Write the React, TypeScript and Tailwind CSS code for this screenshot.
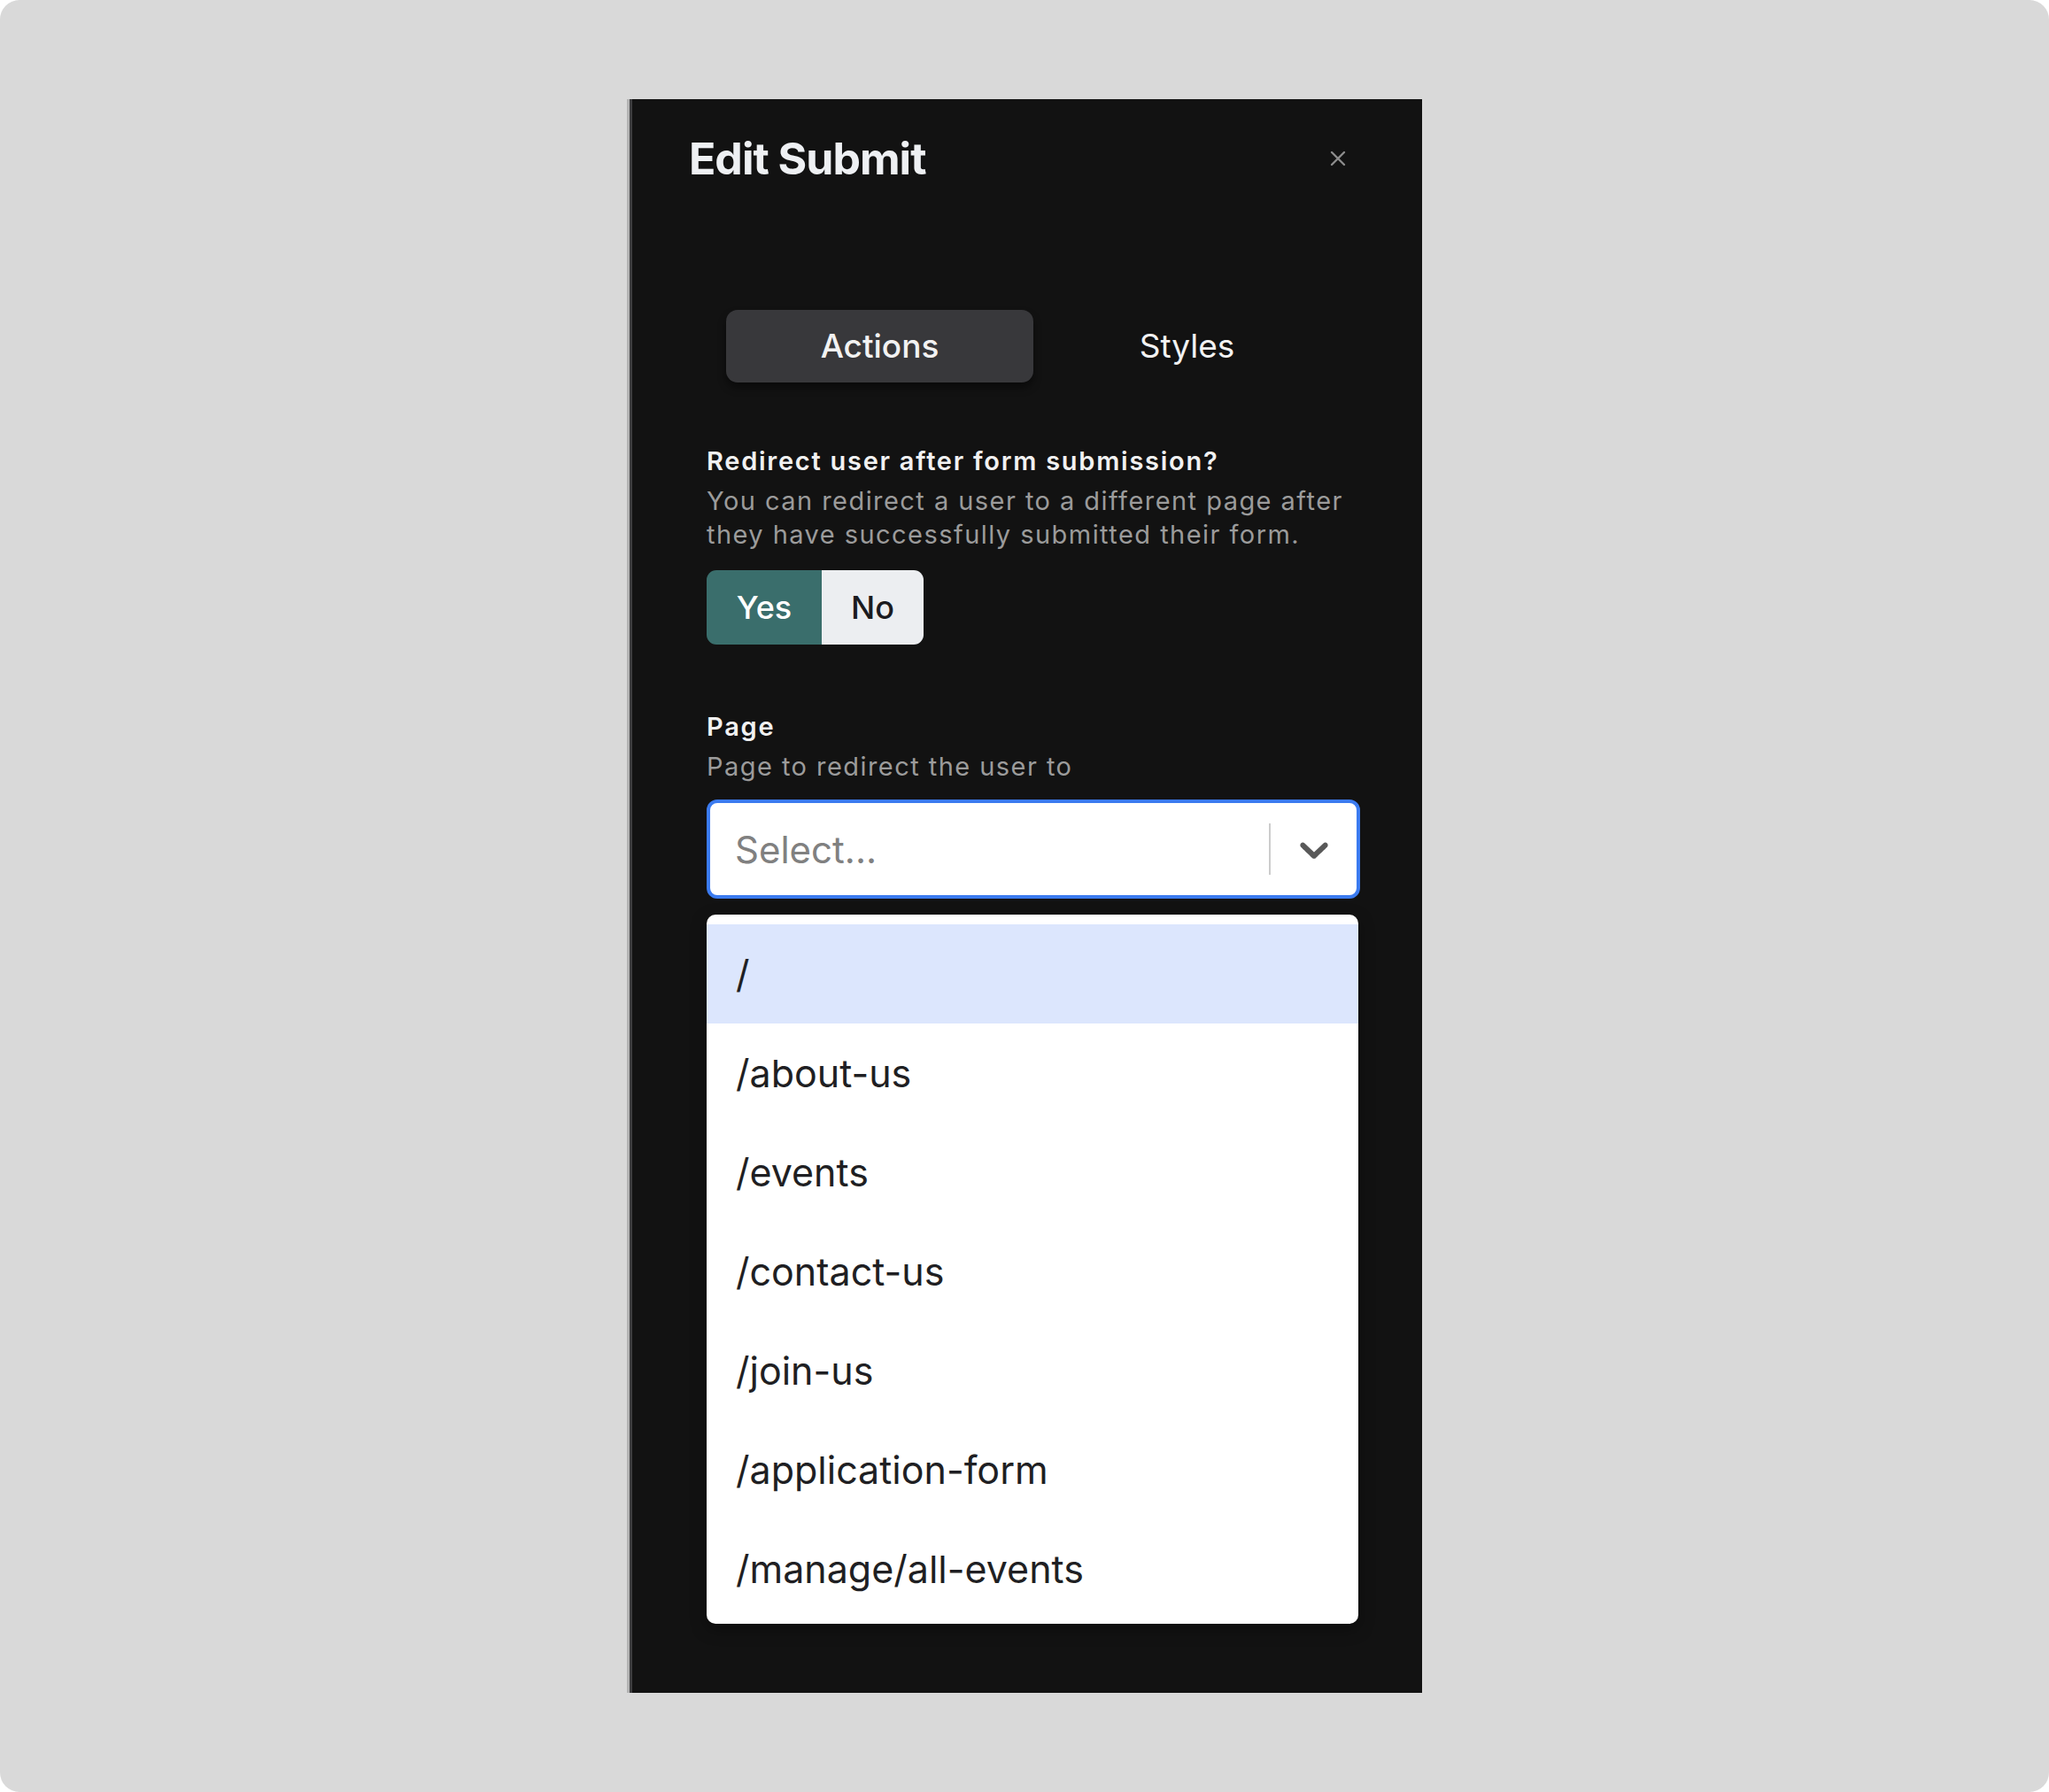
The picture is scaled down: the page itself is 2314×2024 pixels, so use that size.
import React, { useState } from "react";

const pages = [
  "/",
  "/about-us",
  "/events",
  "/contact-us",
  "/join-us",
  "/application-form",
  "/manage/all-events",
];

export default function App() {
  const [tab, setTab] = useState<"actions" | "styles">("actions");
  const [redirect, setRedirect] = useState(true);
  const [hovered, setHovered] = useState(0);

  return (
    <div className="w-[2314px] h-[2024px] bg-white font-['Inter',sans-serif]">
      <div className="w-full h-full bg-[#d9d9d9] rounded-[22px] flex items-center justify-center">
        <div className="w-[898px] h-[1800px] flex">
          {/* edge of the page underneath */}
          <div className="w-[3px] bg-[#b3b3b3]" />
          <div className="w-[3px] bg-[#3c3c3e]" />

          <aside className="flex-1 bg-[#121212] pl-[64px] pr-[70px] pt-[42px]">
            {/* Header */}
            <div className="flex items-center justify-between">
              <h1 className="text-[50px] leading-[50px] font-bold tracking-[-0.02em] text-[#eef0f3]">
                Edit Submit
              </h1>
              <button className="mr-[16px] text-[#8c8c8c]">
                <svg width="18" height="18" viewBox="0 0 18 18" fill="none" stroke="currentColor" strokeWidth="2.4" strokeLinecap="round">
                  <path d="M2 2L16 16M16 2L2 16" />
                </svg>
              </button>
            </div>

            <div className="pl-[20px]">
              {/* Tabs */}
              <div className="mt-[146px] mx-[22px] grid grid-cols-2 h-[82px]">
                <button
                  onClick={() => setTab("actions")}
                  className={`rounded-[13px] text-[37px] font-medium text-[#f2f2f2] ${
                    tab === "actions" ? "bg-[#38383b] shadow-[0_6px_10px_rgba(0,0,0,0.45)]" : ""
                  }`}
                >
                  Actions
                </button>
                <button
                  onClick={() => setTab("styles")}
                  className={`rounded-[13px] text-[37px] text-[#f2f2f2] ${
                    tab === "styles" ? "bg-[#38383b] font-medium" : "font-normal"
                  }`}
                >
                  Styles
                </button>
              </div>

              {/* Redirect question */}
              <p className="mt-[71px] text-[29px] leading-[36px] font-semibold tracking-[0.06em] text-[#f1f1f1]">
                Redirect user after form submission?
              </p>
              <p className="mt-[8px] text-[29px] leading-[38px] tracking-[0.05em] text-[#9b9b9b]">
                You can redirect a user to a different page after they have successfully submitted their form.
              </p>

              <div className="mt-[21px] flex h-[84px] w-fit rounded-[11px] overflow-hidden text-[36px] font-medium">
                <button
                  onClick={() => setRedirect(true)}
                  className={`w-[130px] ${redirect ? "bg-[#3a6e6c] text-white" : "bg-[#eceef1] text-[#1b1b1f]"}`}
                >
                  Yes
                </button>
                <button
                  onClick={() => setRedirect(false)}
                  className={`w-[115px] ${!redirect ? "bg-[#3a6e6c] text-white" : "bg-[#eceef1] text-[#1b1b1f]"}`}
                >
                  No
                </button>
              </div>

              {/* Page select */}
              <p className="mt-[75px] text-[29px] leading-[36px] font-semibold tracking-[0.06em] text-[#f1f1f1]">Page</p>
              <p className="mt-[8px] text-[29px] leading-[38px] tracking-[0.05em] text-[#9b9b9b]">Page to redirect the user to</p>

              <div className="mt-[18px] h-[112px] flex items-center bg-white rounded-[12px] border-[4px] border-[#3b7bf0]">
                <span className="flex-1 pl-[28px] text-[42px] text-[#808080]">Select...</span>
                <span className="w-[2px] h-[58px] bg-[#cccccc]" />
                <span className="w-[97px] flex items-center justify-center text-[#595959]">
                  <svg width="54" height="54" viewBox="0 0 20 20" fill="currentColor">
                    <path d="M4.516 7.548c0.436-0.446 1.043-0.481 1.576 0l3.908 3.747 3.908-3.747c0.533-0.481 1.141-0.446 1.574 0 0.436 0.445 0.408 1.197 0 1.615-0.406 0.418-4.695 4.502-4.695 4.502-0.217 0.223-0.502 0.335-0.787 0.335s-0.57-0.112-0.789-0.335c0 0-4.287-4.084-4.695-4.502s-0.436-1.17 0-1.615z" />
                  </svg>
                </span>
              </div>

              <ul className="mt-[18px] mr-[2px] bg-white rounded-[10px] pt-[11px] pb-[6px] shadow-[0_6px_18px_rgba(0,0,0,0.35)]">
                {pages.map((p, i) => (
                  <li
                    key={p}
                    onMouseEnter={() => setHovered(i)}
                    className={`h-[112px] flex items-center pl-[33px] text-[43px] text-[#1f1f23] ${
                      hovered === i ? "bg-[#dce6fd]" : ""
                    }`}
                  >
                    {p}
                  </li>
                ))}
              </ul>
            </div>
          </aside>
        </div>
      </div>
    </div>
  );
}
